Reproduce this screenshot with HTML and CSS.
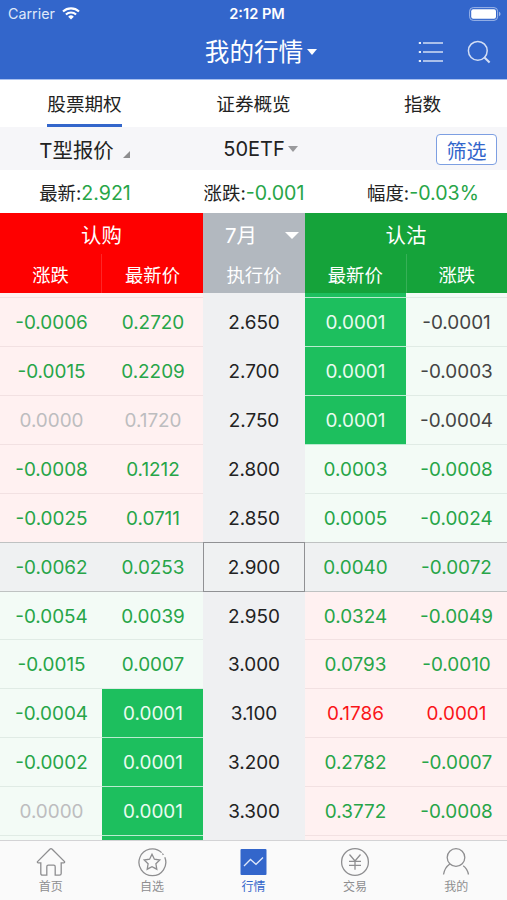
FILE: index.html
```html
<!DOCTYPE html>
<html lang="zh-CN">
<head>
    <meta charset="UTF-8">
    <meta name="viewport" content="width=device-width, initial-scale=1.0">
    <title>我的行情</title>
    <link rel="stylesheet" href="styles.css">
</head>
<body>
    <div class="app">
        <header class="header">
            <div class="status">
                <div class="status-left">
                    <span class="carrier">Carrier</span>
                    <svg class="wifi" viewBox="0 0 18 13">
                        <path d="M1 4.6a11.6 11.6 0 0 1 16 0M3.9 7.6a7.4 7.4 0 0 1 10.2 0" fill="none" stroke="#fff" stroke-width="2.1"/>
                        <path d="M9 12.4L6.2 9.7a4 4 0 0 1 5.6 0z" fill="#fff"/>
                    </svg>
                </div>
                <div class="time">2:12 PM</div>
                <div class="status-right">
                    <svg class="battery" viewBox="0 0 32 14">
                        <rect x=".6" y=".6" width="28" height="12.8" rx="3.6" fill="none" stroke="#9db6e8" stroke-width="1"/>
                        <rect x="2.2" y="2.2" width="24.8" height="9.6" rx="2" fill="#fff"/>
                        <path d="M30 4.8v4.4c1-.4 1.5-1.2 1.5-2.2s-.5-1.8-1.5-2.2z" fill="#9db6e8"/>
                    </svg>
                </div>
            </div>
            <div class="navbar">
                <div class="title">我的行情<i class="caret"></i></div>
                <div class="nav-icons">
                    <svg class="icon-list" viewBox="0 0 26 22">
                        <path d="M5 2h20M5 11h20M5 20h20" stroke="#d3def5" stroke-width="1.5"/>
                        <path d="M.8 2h2.2M.8 11h2.2M.8 20h2.2" stroke="#e6edfa" stroke-width="2.2"/>
                    </svg>
                    <svg class="icon-search" viewBox="0 0 24 24" fill="none" stroke="#d3def5" stroke-width="1.5">
                        <circle cx="10.8" cy="10.8" r="9.4"/>
                        <path d="M17.2 17.2l5.4 5.4" stroke-width="2.1"/>
                    </svg>
                </div>
            </div>
        </header>

        <nav class="tabs">
            <div class="tab"><span class="tab-text active">股票期权</span></div>
            <div class="tab"><span class="tab-text">证券概览</span></div>
            <div class="tab"><span class="tab-text">指数</span></div>
        </nav>

        <div class="filter">
            <div class="filter-item">T型报价<i class="corner"></i></div>
            <div class="filter-item target">50ETF<i class="caret gray"></i></div>
            <div class="filter-action"><button class="filter-btn">筛选</button></div>
        </div>

        <div class="summary">
            <div class="summary-item">最新:<b class="num down">2.921</b></div>
            <div class="summary-item">涨跌:<b class="num down">-0.001</b></div>
            <div class="summary-item">幅度:<b class="num down">-0.03%</b></div>
        </div>

        <div class="thead">
            <div class="th-call">
                <div class="th-title">认购</div>
                <div class="th-cols"><span>涨跌</span><span>最新价</span></div>
            </div>
            <div class="th-strike">
                <div class="th-title month">7月<i class="caret big"></i></div>
                <div class="th-cols"><span>执行价</span></div>
            </div>
            <div class="th-put">
                <div class="th-title">认沽</div>
                <div class="th-cols"><span>最新价</span><span>涨跌</span></div>
            </div>
        </div>

        <div class="tbody">
            <div class="row cut"><span class="red"></span><span class="red"></span><span class="strike"></span><span class="fill"></span><span class="green"></span></div>
            <div class="row"><span class="red down">-0.0006</span><span class="red down">0.2720</span><span class="strike">2.650</span><span class="fill">0.0001</span><span class="green">-0.0001</span></div>
            <div class="row"><span class="red down">-0.0015</span><span class="red down">0.2209</span><span class="strike">2.700</span><span class="fill">0.0001</span><span class="green">-0.0003</span></div>
            <div class="row"><span class="red flat">0.0000</span><span class="red flat">0.1720</span><span class="strike">2.750</span><span class="fill">0.0001</span><span class="green">-0.0004</span></div>
            <div class="row"><span class="red down">-0.0008</span><span class="red down">0.1212</span><span class="strike">2.800</span><span class="green down">0.0003</span><span class="green down">-0.0008</span></div>
            <div class="row"><span class="red down">-0.0025</span><span class="red down">0.0711</span><span class="strike">2.850</span><span class="green down">0.0005</span><span class="green down">-0.0024</span></div>
            <div class="row current"><span class="down">-0.0062</span><span class="down">0.0253</span><span class="strike">2.900</span><span class="down">0.0040</span><span class="down">-0.0072</span></div>
            <div class="row"><span class="green down">-0.0054</span><span class="green down">0.0039</span><span class="strike">2.950</span><span class="red down">0.0324</span><span class="red down">-0.0049</span></div>
            <div class="row"><span class="green down">-0.0015</span><span class="green down">0.0007</span><span class="strike">3.000</span><span class="red down">0.0793</span><span class="red down">-0.0010</span></div>
            <div class="row"><span class="green down">-0.0004</span><span class="fill">0.0001</span><span class="strike">3.100</span><span class="red up">0.1786</span><span class="red up">0.0001</span></div>
            <div class="row"><span class="green down">-0.0002</span><span class="fill">0.0001</span><span class="strike">3.200</span><span class="red down">0.2782</span><span class="red down">-0.0007</span></div>
            <div class="row"><span class="green flat">0.0000</span><span class="fill">0.0001</span><span class="strike">3.300</span><span class="red down">0.3772</span><span class="red down">-0.0008</span></div>
            <div class="row"><span class="green"></span><span class="fill"></span><span class="strike"></span><span class="red"></span><span class="red"></span></div>
        </div>

        <footer class="tabbar">
            <div class="tabbar-item">
                <svg viewBox="0 0 30 30">
                    <path d="M1.5 14.6L13.8 2.2q1.2-1.1 2.4 0L28.5 14.6q.5 1.2-.8 1.2h-2.5v10.6q0 1.8-1.8 1.8h-4.2v-8.5q0-1.5-1.5-1.5h-5.4q-1.5 0-1.5 1.5v8.5H6.6q-1.8 0-1.8-1.8V15.8H2.3q-1.3 0-.8-1.2z"/>
                </svg>
                <span>首页</span>
            </div>
            <div class="tabbar-item">
                <svg viewBox="0 0 30 30">
                    <path d="M27.8 10.3A13.4 13.4 0 1 1 24.6 5.6M25.4 6.5l1 1.5"/>
                    <path d="M15 7.3l2.4 4.9 5.4.8-3.9 3.8.9 5.4-4.8-2.5-4.8 2.5.9-5.4-3.9-3.8 5.4-.8z"/>
                </svg>
                <span>自选</span>
            </div>
            <div class="tabbar-item on">
                <svg viewBox="0 0 30 30">
                    <rect x="1.5" y="2" width="26" height="26" rx="1" fill="#3366cb" stroke="none"/>
                    <path d="M5 19l6.500-6.500 5.500 4.800 7-6.800" stroke="#dfe8fa"/>
                </svg>
                <span>行情</span>
            </div>
            <div class="tabbar-item">
                <svg viewBox="0 0 30 30">
                    <circle cx="15" cy="15" r="13.4"/>
                    <path d="M9.5 7.5l5.5 6.5 5.5-6.5M9 14.3h12M9 18.3h12M15 14v8.8"/>
                </svg>
                <span>交易</span>
            </div>
            <div class="tabbar-item">
                <svg viewBox="0 0 30 30">
                    <circle cx="15" cy="10.5" r="8.8"/>
                    <path d="M2.5 27.5q1.2-7 6.3-10.5M27.5 27.5q-1.2-6-5.3-8.8"/>
                </svg>
                <span>我的</span>
            </div>
        </footer>
    </div>
</body>
</html>
```
FILE: styles.css
```css
* {
    margin: 0;
    padding: 0;
    box-sizing: border-box;
}

body {
    font-family: Inter, "Noto Sans CJK SC", sans-serif;
    color: #222;
    background: #fff;
}

.app {
    width: 507px;
    height: 900px;
    display: flex;
    flex-direction: column;
    overflow: hidden;
}

/* 顶部 */
.header {
    height: 79px;
    background: #3366cb;
    color: #fff;
    flex: none;
}

.status {
    height: 27px;
    display: grid;
    grid-template-columns: 1fr auto 1fr;
    align-items: center;
    padding: 0 6px 0 8px;
    font-size: 14px;
}

.status-left {
    display: flex;
    align-items: center;
    gap: 7px;
}

.carrier {
    font-size: 14.3px;
    color: #dfe8f9;
}

.wifi {
    width: 18px;
    height: 13px;
}

.time {
    font-size: 14.6px;
    font-weight: 600;
    padding-left: 5px;
}

.status-right {
    display: flex;
    justify-content: flex-end;
}

.battery {
    width: 32px;
    height: 14px;
}

.navbar {
    height: 50px;
    display: grid;
    grid-template-columns: 1fr auto 1fr;
    align-items: center;
    padding-right: 16px;
}

.title {
    grid-column: 2;
    display: flex;
    align-items: center;
    height: 50px;
    line-height: 50px;
    font-size: 24.6px;
    padding-left: 31px;
}

.caret {
    border: 5.5px solid transparent;
    border-top: 6px solid #fff;
    border-bottom: 0;
    margin-left: 4px;
}

.nav-icons {
    display: flex;
    justify-content: flex-end;
    align-items: center;
    gap: 23px;
}

.icon-list {
    width: 26px;
    height: 22px;
}

.icon-search {
    width: 24px;
    height: 24px;
}

/* 分类 */
.tabs {
    height: 48px;
    display: flex;
    flex: none;
    border-top: 1px solid #a9c0ef;
}

.tab {
    flex: 1;
    display: flex;
    justify-content: center;
}

.tab-text {
    height: 47px;
    line-height: 48px;
    font-size: 18.6px;
}

.tab-text.active {
    border-bottom: 3px solid #3366cb;
}

.filter {
    height: 43px;
    display: grid;
    grid-template-columns: repeat(3, 1fr);
    align-items: center;
    flex: none;
    background: #f6f6f9;
}

.filter-item {
    display: flex;
    align-items: center;
    justify-content: center;
    font-size: 20.4px;
    height: 43px;
}

.target {
    padding: 1px 0 0 14px;
    font-size: 20px;
}

.corner {
    border-left: 7px solid transparent;
    border-bottom: 7px solid #8d8d8f;
    margin: 12px 0 0 9px;
}

.caret.gray {
    border-top-color: #9a9a9d;
    margin-left: 3px;
}

.filter-action {
    display: flex;
    justify-content: flex-end;
    padding: 2px 10px 0 0;
}

.filter-btn {
    width: 61px;
    height: 31px;
    border: 1px solid #7d9fe2;
    border-radius: 4px;
    background: #fff;
    color: #3366cb;
    padding-top: 5px;
    font: 20px/24px Inter, "Noto Sans CJK SC", sans-serif;
}

.summary {
    height: 43px;
    display: grid;
    grid-template-columns: repeat(3, 1fr);
    align-items: center;
    flex: none;
}

.summary-item {
    text-align: center;
    font-size: 18.4px;
    padding-left: 1px;
}

.num {
    font-weight: 400;
    font-size: 19.6px;
}

/* 表头 */
.thead,
.row {
    display: grid;
    grid-template-columns: 102px 101px 102px 101px 101px;
}

.thead {
    height: 80px;
    flex: none;
    color: #fff;
}

.th-call {
    grid-column: span 2;
    background: #fe0000;
}

.th-strike {
    background: #b2b8bf;
}

.th-put {
    grid-column: span 2;
    background: #15a33a;
}

.th-title {
    height: 41px;
    line-height: 46px;
    font-size: 20.4px;
    text-align: center;
}

.month {
    display: flex;
    align-items: center;
    justify-content: space-between;
    padding: 4px 6px 0 22px;
}

.caret.big {
    border-width: 7px 7.5px 0;
}

.th-cols {
    height: 39px;
    display: flex;
    line-height: 42px;
    font-size: 18.3px;
    text-align: center;
}

.th-cols span {
    flex: 1;
}

.th-cols span + span {
    border-left: 1px solid rgba(255, 255, 255, .15);
}

/* 报价列表 */
.tbody {
    flex: 1;
    overflow: hidden;
}

.row {
    height: 48.9px;
    grid-template-rows: 100%;
    font-size: 18.9px;
    line-height: 49px;
    text-align: center;
}

.row span {
    border-bottom: 1px solid #e3e8e6;
}

.row span:nth-child(-n+2) {
    padding-left: 1px;
}

.row.cut {
    height: 5.2px;
}

.row .red {
    background: #fff1f1;
    border-color: #f2e1e2;
}

.row .green {
    background: #f3fbf6;
    border-color: #e0ebe5;
    color: #444;
}

.row .fill {
    background: #1dbf5e;
    border-color: #b9ecd0;
    color: #e9fbf0;
}

.row .strike {
    background: #eff0f2;
    border-color: #eff0f2;
}

.row.current {
    height: 49.9px;
    margin-top: -1px;
}

.row.current span {
    background: #eff1f2;
    border-top: 1px solid #bfc2c2;
    border-bottom-color: #bfc2c2;
}

.row.current .strike {
    border: 1px solid #909194;
}

.down,
.row .down {
    color: #27a548;
}

.row .up {
    color: #fa1519;
}

.row .flat {
    color: #bdbdbf;
}

/* 底部导航 */
.tabbar {
    height: 60px;
    flex: none;
    display: flex;
    background: #fafafa;
    border-top: 1px solid #d3d3d5;
}

.tabbar-item {
    flex: 1;
    display: flex;
    flex-direction: column;
    align-items: center;
    padding-top: 6px;
    font-size: 12px;
    line-height: 17px;
    color: #8e8e90;
}

.tabbar-item svg {
    width: 30px;
    height: 30px;
    fill: none;
    stroke: #8e8e90;
    stroke-width: 1.3;
}

.tabbar-item span {
    margin-top: 1px;
}

.tabbar-item.on {
    color: #3366cb;
}
```
